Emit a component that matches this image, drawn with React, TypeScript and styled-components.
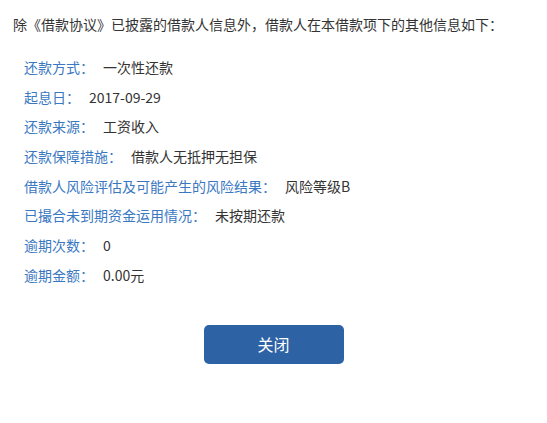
import React from "react";
import styled, { createGlobalStyle } from "styled-components";

const Global = createGlobalStyle`
  html, body { margin: 0; padding: 0; background: #fff; }
  body { font-family: "Microsoft YaHei", "Noto Sans CJK SC", "Noto Sans", sans-serif; }
`;

const Wrap = styled.div`
  width: 547px;
  padding: 9px 0 0 13px;
  box-sizing: border-box;
`;

const Intro = styled.p`
  margin: 0;
  font-size: 14px;
  line-height: 30px;
  color: #333;
`;

const List = styled.ul`
  list-style: none;
  margin: 13px 0 0 0;
  padding: 0 0 0 11px;
`;

const Row = styled.li`
  display: flex;
  font-size: 14px;
  line-height: 30px;
  height: 29.7px;
  align-items: center;
`;

const Label = styled.span`
  color: #3a78c2;
`;

const Value = styled.span`
  color: #333;
  margin-left: 9px;
`;

const Footer = styled.div`
  display: flex;
  justify-content: center;
  margin: 35px 0 0 -13px;
`;

const Button = styled.button`
  width: 140px;
  height: 39px;
  border: none;
  border-radius: 5px;
  background: #2d62a5;
  color: #fff;
  font-family: inherit;
  font-size: 16px;
  cursor: pointer;
`;

const rows: [string, string][] = [
  ["还款方式：", "一次性还款"],
  ["起息日：", "2017-09-29"],
  ["还款来源：", "工资收入"],
  ["还款保障措施：", "借款人无抵押无担保"],
  ["借款人风险评估及可能产生的风险结果：", "风险等级B"],
  ["已撮合未到期资金运用情况：", "未按期还款"],
  ["逾期次数：", "0"],
  ["逾期金额：", "0.00元"],
];

export default function App() {
  return (
    <>
      <Global />
      <Wrap>
        <Intro>除《借款协议》已披露的借款人信息外，借款人在本借款项下的其他信息如下：</Intro>
        <List>
          {rows.map(([l, v]) => (
            <Row key={l}>
              <Label>{l}</Label>
              <Value>{v}</Value>
            </Row>
          ))}
        </List>
        <Footer>
          <Button>关闭</Button>
        </Footer>
      </Wrap>
    </>
  );
}
